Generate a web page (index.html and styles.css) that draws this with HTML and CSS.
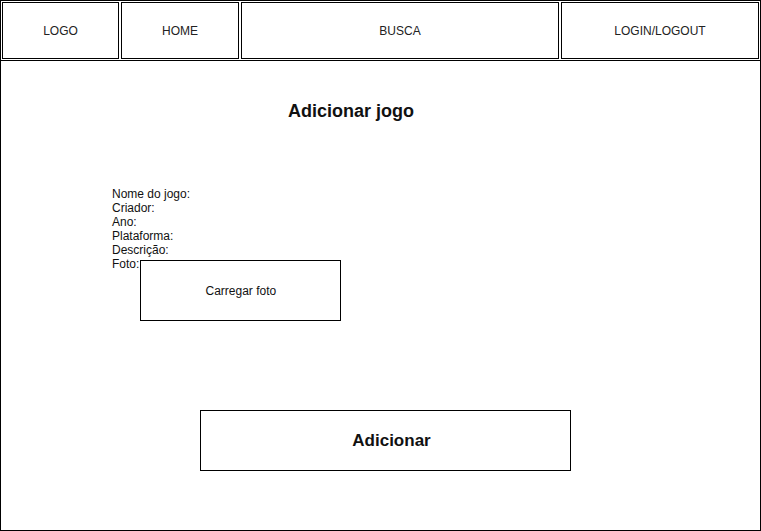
FILE: index.html
```html
<!DOCTYPE html>
<html lang="pt">
<head>
  <meta charset="UTF-8">
  <title>Adicionar jogo</title>
  <link rel="stylesheet" href="styles.css">
</head>
<body>
  <div class="page">
    <!-- Top navigation -->
    <nav class="nav">
      <div class="nav-item">LOGO</div>
      <div class="nav-item">HOME</div>
      <div class="nav-item">BUSCA</div>
      <div class="nav-item">LOGIN/LOGOUT</div>
    </nav>

    <!-- Form -->
    <main class="content">
      <h1 class="title">Adicionar jogo</h1>

      <div class="fields">
        <div class="field">Nome do jogo:</div>
        <div class="field">Criador:</div>
        <div class="field">Ano:</div>
        <div class="field">Plataforma:</div>
        <div class="field">Descrição:</div>
        <div class="field photo-row">
          <span>Foto:</span>
          <div class="upload">Carregar foto</div>
        </div>
      </div>

      <div class="submit">Adicionar</div>
    </main>
  </div>
</body>
</html>
```

FILE: styles.css
```css
/* Base */
* {
  box-sizing: border-box;
}

body {
  margin: 0;
  background: #fff;
  font-family: "Liberation Sans", Arial, sans-serif;
  color: #111;
}

.page {
  width: 761px;
  height: 531px;
  border: 1px solid #000;
}

/* Navigation */
.nav {
  display: grid;
  grid-template-columns: 117px 118px 318px 198px;
  column-gap: 2px;
  padding: 1px;
  border-bottom: 1px solid #000;
}

.nav-item {
  height: 57px;
  border: 1px solid #000;
  display: flex;
  align-items: center;
  justify-content: center;
  font-size: 12px;
  color: #222;
}

/* Content */
.content {
  padding-top: 40px;
}

.title {
  width: 700px;
  margin: 0;
  text-align: center;
  font-size: 18px;
  line-height: 21px;
  font-weight: bold;
}

.fields {
  margin-top: 65px;
  padding-left: 111px;
  font-size: 12px;
  line-height: 14px;
}

.photo-row {
  display: flex;
  align-items: flex-start;
  gap: 1px;
}

.upload {
  width: 201px;
  height: 61px;
  margin-top: 3px;
  border: 1px solid #000;
  display: flex;
  align-items: center;
  justify-content: center;
}

.submit {
  width: 371px;
  height: 61px;
  margin: 89px 0 0 199px;
  padding-left: 12px;
  border: 1px solid #000;
  display: flex;
  align-items: center;
  justify-content: center;
  font-size: 17px;
  font-weight: bold;
}
```
